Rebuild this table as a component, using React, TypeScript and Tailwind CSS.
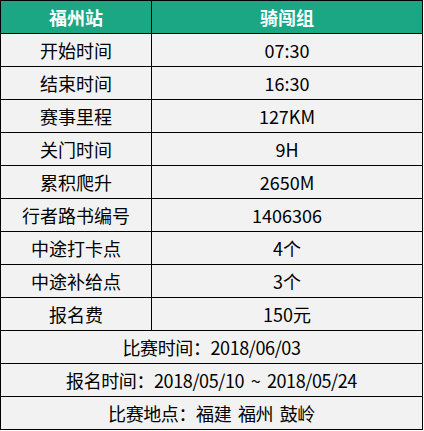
import React from 'react';

const rows: [string, string][] = [
    ['开始时间', '07:30'],
    ['结束时间', '16:30'],
    ['赛事里程', '127KM'],
    ['关门时间', '9H'],
    ['累积爬升', '2650M'],
    ['行者路书编号', '1406306'],
    ['中途打卡点', '4个'],
    ['中途补给点', '3个'],
    ['报名费', '150元'],
];

const notes = ['比赛时间：2018/06/03', '报名时间：2018/05/10 ~ 2018/05/24', '比赛地点：福建 福州 鼓岭'];

const App: React.FC = () => {
    return (
        <div className="w-[424px] h-[431px] bg-white" style={{ fontFamily: '"Noto Sans CJK SC", "Noto Sans", sans-serif' }}>
            <div className="w-[423px] border-t border-l border-black text-[18px] leading-none text-black">
                <div className="grid grid-cols-[151px_1fr] h-[33px] bg-[#1ba784] text-white font-bold">
                    <div className="flex items-center justify-center border-r border-b border-black">福州站</div>
                    <div className="flex items-center justify-center border-r border-b border-black">骑闯组</div>
                </div>
                {rows.map(([label, value]) => (
                    <div key={label} className="grid grid-cols-[151px_1fr] h-[33px] bg-[#f2f2f2]">
                        <div className="flex items-center justify-center border-r border-b border-black">{label}</div>
                        <div className="flex items-center justify-center border-r border-b border-black">{value}</div>
                    </div>
                ))}
                {notes.map((note) => (
                    <div key={note} className="flex items-center justify-center h-[33px] bg-[#f2f2f2] border-r border-b border-black tracking-[-0.4px] [word-spacing:3px] whitespace-pre">
                        {note}
                    </div>
                ))}
            </div>
        </div>
    );
};

export default App;
